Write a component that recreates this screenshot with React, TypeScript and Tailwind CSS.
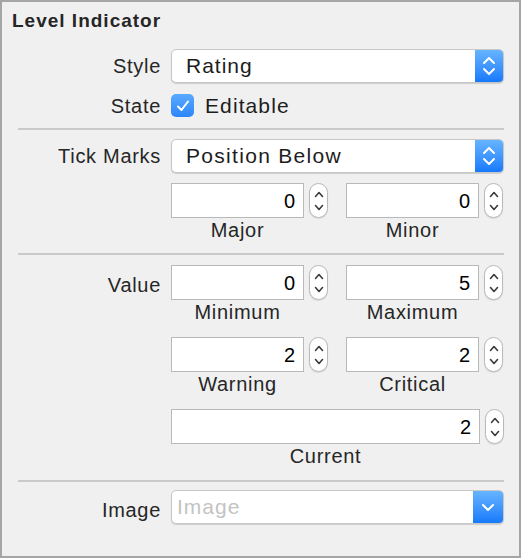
import type { ReactNode } from 'react'

const FONT = "font-['Liberation_Sans',Arial,sans-serif]"

function UpDown({ className = '' }: { className?: string }) {
  return (
    <svg width="14" height="22" viewBox="0 0 14 22" fill="none" className={className}>
      <path d="M2 8 L7 3 L12 8" stroke="white" strokeWidth="2" strokeLinecap="round" strokeLinejoin="round" />
      <path d="M2 14 L7 19 L12 14" stroke="white" strokeWidth="2" strokeLinecap="round" strokeLinejoin="round" />
    </svg>
  )
}

function Popup({
  value,
  placeholder = false,
  single = false,
  big = false,
}: {
  value: string
  placeholder?: boolean
  single?: boolean
  big?: boolean
}) {
  return (
    <div className="flex h-[34px] w-[333px] overflow-hidden rounded-[5px] border border-[#c7c7c7] bg-white shadow-[0_1px_1px_rgba(0,0,0,0.15)]">
      <div
        className={`flex flex-1 items-center text-[21px] ${big ? 'tracking-[1.3px]' : 'tracking-[1px]'} ${
          placeholder ? 'pl-[5px] text-[#c3c3c3]' : 'pl-[14px] text-[#1d1d1d]'
        }`}
      >
        {value}
      </div>
      <div
        className={`flex ${single ? 'w-[30px]' : 'w-[28px]'} items-center justify-center bg-linear-to-b from-[#66b4ff] to-[#1479fb]`}
      >
        {single ? (
          <svg width="14" height="10" viewBox="0 0 14 10" fill="none">
            <path d="M2 3 L7 8 L12 3" stroke="white" strokeWidth="2" strokeLinecap="round" strokeLinejoin="round" />
          </svg>
        ) : (
          <UpDown />
        )}
      </div>
    </div>
  )
}

function Stepper() {
  return (
    <div className="flex h-[35px] w-[19px] flex-col items-center justify-center gap-[6px] rounded-full border border-[#b9b9b9] bg-white shadow-[0_1px_1px_rgba(0,0,0,0.1)]">
      <svg width="10" height="7" viewBox="0 0 10 7" fill="none">
        <path d="M1.5 5.5 L5 1.5 L8.5 5.5" stroke="#3a3a3a" strokeWidth="1.6" strokeLinecap="round" strokeLinejoin="round" />
      </svg>
      <svg width="10" height="7" viewBox="0 0 10 7" fill="none">
        <path d="M1.5 1.5 L5 5.5 L8.5 1.5" stroke="#3a3a3a" strokeWidth="1.6" strokeLinecap="round" strokeLinejoin="round" />
      </svg>
    </div>
  )
}

function NumField({ value, label, wide = false }: { value: string; label: string; wide?: boolean }) {
  return (
    <div className="flex flex-col">
      <div className="flex items-center gap-[5px]">
        <div
          className={`flex h-[35px] ${wide ? 'w-[309px]' : 'w-[133px]'} items-center justify-end border border-[#b9b9b9] bg-white pr-[8px] text-[20px] text-black`}
        >
          {value}
        </div>
        <Stepper />
      </div>
      <div
        className={`${wide ? 'w-[309px]' : 'w-[133px]'} text-center text-[20px] leading-[24px] tracking-[0.7px] text-[#262626]`}
      >
        {label}
      </div>
    </div>
  )
}

function Row({ label, children, className = '' }: { label?: string; children: ReactNode; className?: string }) {
  return (
    <div className={`flex ${className}`}>
      <div className="flex w-[159px] items-center justify-end text-[20px] tracking-[0.7px] text-[#262626]">
        {label}
      </div>
      <div className="ml-[10px]">{children}</div>
    </div>
  )
}

function Separator({ className = '' }: { className?: string }) {
  return <div className={`ml-[16px] h-[2px] w-[486px] bg-[#cacaca] ${className}`} />
}

export default function App() {
  return (
    <div className={`${FONT} h-[558px] w-[521px] border-2 border-[#a5a5a5] bg-[#f0f0f0]`}>
      <div className="pl-[10px] pt-[8px] text-[19px] font-bold leading-[22px] tracking-[1px] text-[#262626]">
        Level Indicator
      </div>

      <Row label="Style" className="mt-[17px] items-center">
        <Popup value="Rating" />
      </Row>

      <Row label="State" className="mt-[11px] h-[23px] items-center">
        <div className="flex items-center">
          <div className="flex h-[23px] w-[23px] items-center justify-center rounded-[5px] bg-linear-to-b from-[#5aa9ff] to-[#2a86f8]">
            <svg width="14" height="12" viewBox="0 0 14 12" fill="none">
              <path d="M2 6.5 L5.5 10 L12 1.5" stroke="white" strokeWidth="2" strokeLinecap="round" strokeLinejoin="round" />
            </svg>
          </div>
          <span className="ml-[11px] text-[21px] tracking-[1.1px] text-[#1d1d1d]">Editable</span>
        </div>
      </Row>

      <Separator className="mt-[11px]" />

      <Row label="Tick Marks" className="mt-[9px] items-center">
        <Popup value="Position Below" big />
      </Row>

      <Row className="mt-[10px]">
        <div className="flex gap-[18px]">
          <NumField value="0" label="Major" />
          <NumField value="0" label="Minor" />
        </div>
      </Row>

      <Separator className="mt-[11px]" />

      <div className="mt-[10px] flex">
        <div className="flex h-[35px] w-[159px] items-center justify-end pt-[4px] text-[20px] tracking-[0.7px] text-[#262626]">
          Value
        </div>
        <div className="ml-[10px] flex flex-col">
          <div className="flex gap-[18px]">
            <NumField value="0" label="Minimum" />
            <NumField value="5" label="Maximum" />
          </div>
          <div className="mt-[13px] flex gap-[18px]">
            <NumField value="2" label="Warning" />
            <NumField value="2" label="Critical" />
          </div>
          <div className="mt-[13px]">
            <NumField value="2" label="Current" wide />
          </div>
        </div>
      </div>

      <Separator className="mt-[12px]" />

      <div className="mt-[8px] flex">
        <div className="flex h-[34px] w-[159px] items-center justify-end pt-[5px] text-[20px] tracking-[0.7px] text-[#262626]">
          Image
        </div>
        <div className="ml-[10px]">
          <Popup value="Image" placeholder single />
        </div>
      </div>
    </div>
  )
}
